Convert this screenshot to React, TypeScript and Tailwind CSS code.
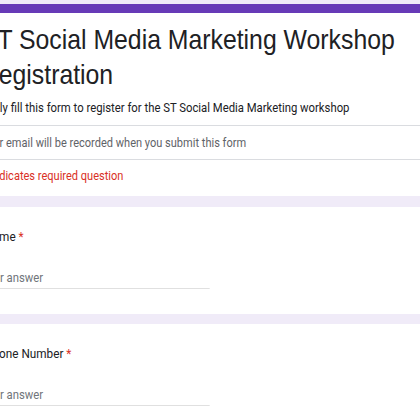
import React from "react";

// The captured page is a little condensed horizontally, so the whole form is
// laid out at natural width and squeezed with scale-x.
const sans = "font-['Roboto','Liberation_Sans',sans-serif]";

function Question({ label, offset }: { label: string; offset: string }) {
  return (
    <div className="bg-white h-[107px] pt-[19px]">
      <div className={`${sans} text-[13.5px] leading-[20px] text-[#202124] whitespace-nowrap ${offset}`}>
        {label} <span className="text-[#d93025]">*</span>
      </div>
      <div className="mt-[24px] w-[263px] -ml-[22px] border-b border-[#e0e0e0] pb-[2px]">
        <div className={`${sans} text-[13px] leading-[16px] text-[#70757a]`}>
          Your answer
        </div>
      </div>
    </div>
  );
}

export default function App() {
  return (
    <div className="w-[420px] h-[420px] overflow-hidden bg-[#f0ebf8]">
      <div className="w-[483px] origin-top-left scale-x-[0.87] pt-[4px]">
        <div className="h-[9px] bg-[#673ab7]" />
        <div className="bg-white h-[183px]">
          <div className="pt-[9px] -ml-[22px] w-[500px] font-['Liberation_Sans',Arial,sans-serif] text-[28.5px] leading-[35px] text-[#202124]">
            ST Social Media Marketing Workshop Registration
          </div>
          <div className={`${sans} mt-[6px] -ml-[26px] text-[13px] leading-[20px] text-[#202124] whitespace-nowrap`}>
            Kindly fill this form to register for the ST Social Media Marketing workshop
          </div>
          <div className="mt-[7px] border-t border-[#dadce0]" />
          <div className={`${sans} h-[33px] flex items-center -ml-[22px] text-[12.7px] text-[#5f6368] whitespace-nowrap`}>
            Your email will be recorded when you submit this form
          </div>
          <div className="border-t border-[#dadce0]" />
          <div className={`${sans} h-[32px] flex items-center -ml-[20px] text-[12.7px] text-[#d93025] whitespace-nowrap`}>
            * Indicates required question
          </div>
        </div>
        <div className="h-[11px]" />
        <Question label="Name" offset="-ml-[18px]" />
        <div className="h-[10px]" />
        <Question label="Phone Number" offset="-ml-[17px]" />
      </div>
    </div>
  );
}
